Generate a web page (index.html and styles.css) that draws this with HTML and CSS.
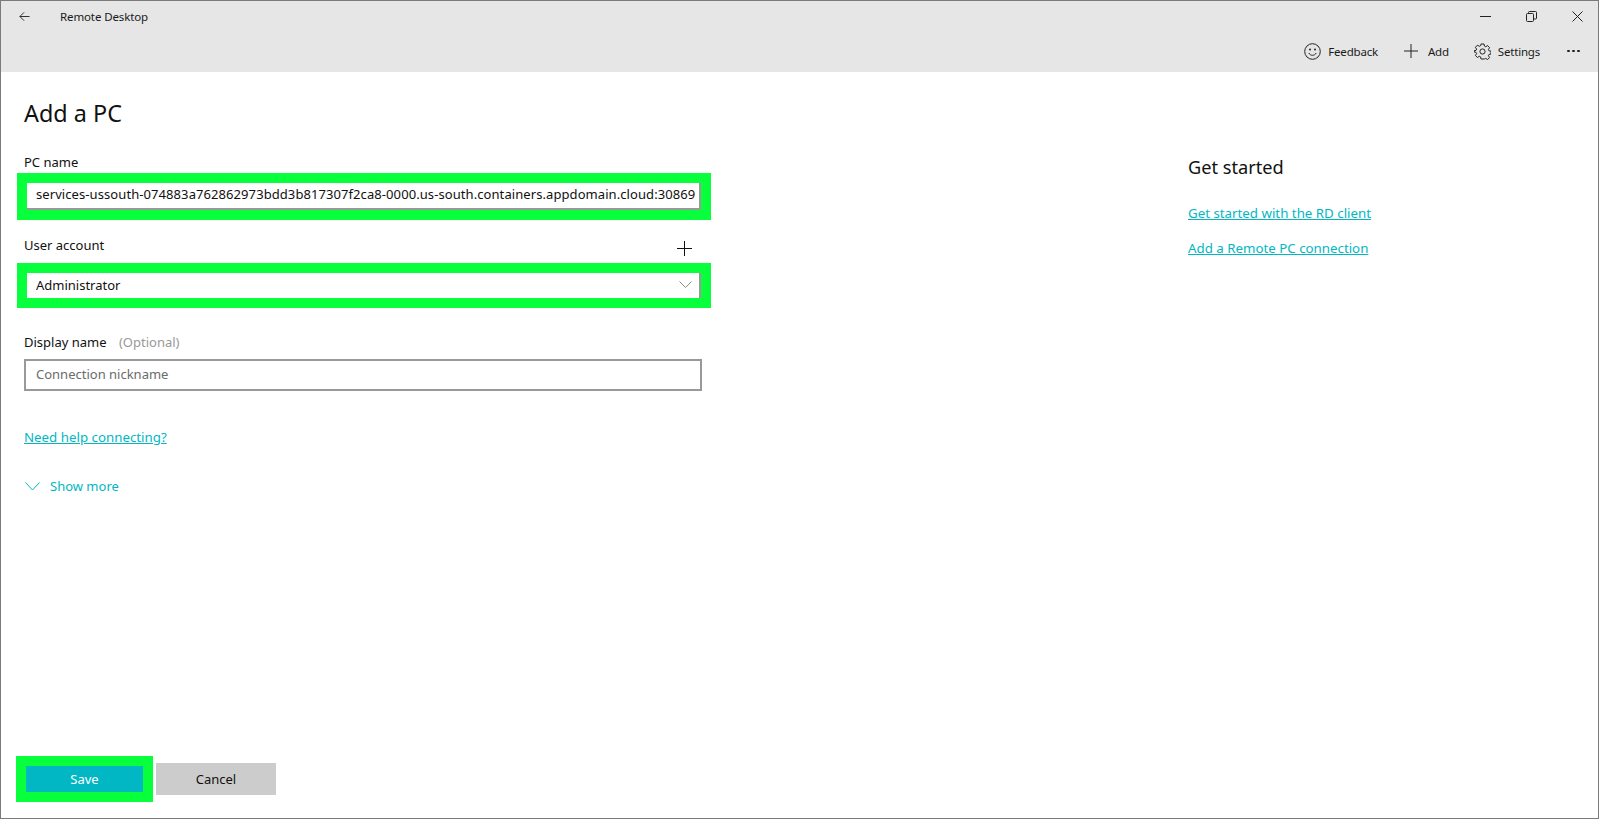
FILE: index.html
```html
<!DOCTYPE html>
<html lang="en">
<head>
<meta charset="utf-8">
<title>Remote Desktop</title>
<link rel="stylesheet" href="styles.css">
</head>
<body>
<div class="window">
  <header class="chrome">
    <div class="titlebar">
      <svg class="ic back" width="11" height="11" viewBox="0 0 12 12"><path d="M11.500 6H1M5.500 1.500 1 6l4.500 4.500" fill="none" stroke="#222" stroke-width="1"/></svg>
      <span class="app-title">Remote Desktop</span>
      <div class="winctl">
        <svg width="11" height="11" viewBox="0 0 11 11"><path d="M0 5.500h11" stroke="#222" stroke-width="1"/></svg>
        <svg width="11" height="11" viewBox="0 0 11 11"><path d="M.5 3.500a1 1 0 0 1 1-1h5a1 1 0 0 1 1 1v6a1 1 0 0 1-1 1h-5a1 1 0 0 1-1-1zM2.500 2.500V1.500a1 1 0 0 1 1-1h6a1 1 0 0 1 1 1v5.500a1 1 0 0 1-1 1H7.500" fill="none" stroke="#222"/></svg>
        <svg width="11" height="11" viewBox="0 0 11 11"><path d="M.5.500l10 10M10.500.500l-10 10" stroke="#222" stroke-width="1"/></svg>
      </div>
    </div>
    <div class="commandbar">
      <span class="cmd cmd-feedback">
        <svg width="17" height="17" viewBox="0 0 17 17"><g fill="none" stroke="#222"><circle cx="8.500" cy="8.500" r="7.800"/><path d="M4.800 10c.8 1.500 2.100 2.300 3.700 2.300s2.900-.8 3.700-2.300"/></g><circle cx="6" cy="6.500" r="1" fill="#222"/><circle cx="11" cy="6.500" r="1" fill="#222"/></svg>
        Feedback
      </span>
      <span class="cmd cmd-add">
        <svg width="14" height="14" viewBox="0 0 14 14"><path d="M0 7h14M7 0v14" stroke="#222"/></svg>
        Add
      </span>
      <span class="cmd cmd-settings">
        <svg width="17" height="17" viewBox="0 0 17 17"><g fill="none" stroke="#222"><circle cx="8.500" cy="8.500" r="2.600"/><path d="M7 1h3l.4 2.100 1.300.6 1.900-1.100 2 2.100-1.200 1.800.6 1.300 2 .4v2.800l-2 .4-.6 1.300 1.200 1.800-2 2.100-1.900-1.200-1.300.6L10 16H7l-.4-2.100-1.300-.6-1.900 1.200-2-2.100 1.200-1.800-.6-1.300-2-.4V7.800l2-.4.6-1.300-1.200-1.800 2-2.100 1.900 1.100 1.300-.6z" stroke-linejoin="round"/></g></svg>
        Settings
      </span>
      <span class="more"><i></i><i></i><i></i></span>
    </div>
  </header>
  <main class="content">
    <section class="form-col">
      <h1 class="page-title">Add a PC</h1>
      <label class="field-label label-pc">PC name</label>
      <div class="highlight hl-pc">
        <div class="input input-pc">services-ussouth-074883a762862973bdd3b817307f2ca8-0000.us-south.containers.appdomain.cloud:30869</div>
      </div>
      <div class="label-row">
        <label class="field-label">User account</label>
        <svg class="add-user" width="15" height="15" viewBox="0 0 15 15"><path d="M0 7.500h15M7.500 0v15" stroke="#111"/></svg>
      </div>
      <div class="highlight hl-user">
        <div class="input input-user">
          <span>Administrator</span>
          <svg width="13" height="7" viewBox="0 0 13 7"><path d="M.5.500 6.500 6.500 12.500.5" fill="none" stroke="#8a8a8a"/></svg>
        </div>
      </div>
      <label class="field-label label-display">Display name <span class="optional">(Optional)</span></label>
      <div class="input input-display">Connection nickname</div>
      <a class="link help-link">Need help connecting?</a>
      <div class="show-more">
        <svg width="15" height="9" viewBox="0 0 15 9"><path d="M.5.500 7.500 8 14.500.5" fill="none" stroke="#00b7c3"/></svg>
        <span>Show more</span>
      </div>
      <div class="actions">
        <div class="highlight hl-save"><button class="btn btn-save">Save</button></div>
        <button class="btn btn-cancel">Cancel</button>
      </div>
    </section>
    <aside class="side-col">
      <h2 class="side-title">Get started</h2>
      <a class="link side-link">Get started with the RD client</a>
      <a class="link side-link">Add a Remote PC connection</a>
    </aside>
  </main>
</div>
</body>
</html>
```
FILE: styles.css
```css
* { box-sizing: border-box; }
html, body { margin: 0; height: 100%; }
body { font-family: "Noto Sans", "Open Sans", sans-serif; font-size: 13px; color: #1a1a1a; background: #fff; }
.window { height: 819px; display: flex; flex-direction: column; border: 1px solid #7a7a7a; overflow: hidden; }
.chrome { height: 71px; background: #e6e6e6; flex: none; display: flex; flex-direction: column; }
.titlebar { height: 31px; display: flex; align-items: center; padding-left: 18px; }
.app-title { margin-left: 30px; font-size: 11.500px; letter-spacing: -.12px; }
.winctl { margin-left: auto; display: flex; gap: 35px; padding-right: 15px; }
.commandbar { flex: 1; display: flex; align-items: center; justify-content: flex-end; padding: 0 19px 2px 0; font-size: 11.500px; letter-spacing: -.2px; }
.cmd { display: flex; align-items: center; gap: 7px; }
.cmd-feedback { margin-right: 26px; }
.cmd-add { gap: 10px; margin-right: 25px; }
.cmd-settings { margin-right: 27px; }
.more { display: flex; gap: 2.500px; width: 12px; }
.more i { flex: none; width: 2.500px; height: 2.500px; border-radius: 50%; background: #222; }
.content { flex: 1; display: flex; min-height: 0; }
.form-col { width: 1187px; padding: 26px 0 16px 16px; display: flex; flex-direction: column; flex: none; }
.page-title { margin: 0 0 25px 7px; font-size: 23.400px; font-weight: 400; line-height: 30px; color: #111; }
.field-label { font-size: 13px; line-height: 18px; color: #111; }
.label-pc { margin: 0 0 2px 7px; }
.highlight { border: 10px solid #08ff3c; background: #fff; flex: none; }
.hl-pc { width: 694px; height: 47px; }
.hl-user { width: 694px; height: 45px; }
.input { display: flex; align-items: center; height: 100%; padding-left: 9px; font-size: 13px; white-space: nowrap; color: #111; }
.input-pc { border-right: 2px solid #999; border-bottom: 2px solid #999; padding-bottom: 4px; letter-spacing: .08px; }
.input-user { justify-content: space-between; padding-right: 7px; padding-bottom: 2px; border-right: 2px solid #999; }
.label-row { display: flex; justify-content: space-between; align-items: flex-start; width: 668px; margin: 16px 0 0 7px; height: 27px; flex: none; }
.add-user { margin-top: 5px; }
.label-display { margin: 25px 0 8px 7px; }
.optional { color: #999; margin-left: 9px; }
.input-display { width: 678px; height: 32px; margin-left: 7px; padding: 0 0 2px 10px; flex: none; border: 2px solid #999; color: #6b6b6b; }
.link { color: #00b7c3; font-size: 13.300px; line-height: 18px; text-decoration: underline; display: block; width: fit-content; }
.help-link { margin: 37px 0 0 7px; }
.show-more { display: flex; align-items: center; gap: 10px; margin: 31px 0 0 8px; color: #00b7c3; height: 18px; }
.actions { margin: auto 0 0 -1px; display: flex; align-items: center; gap: 3px; }
.btn { border: 0; font: inherit; color: #111; padding: 0; }
.hl-save { width: 137px; height: 46px; }
.btn-save { width: 100%; height: 100%; background: #00b7c3; color: #fff; display: block; }
.btn-cancel { width: 120px; height: 32px; background: #ccc; }
.side-col { padding-top: 82px; }
.side-title { margin: 0 0 24px; font-size: 18.200px; font-weight: 400; line-height: 26px; color: #111; }
.side-link { margin-bottom: 17px; }
```
